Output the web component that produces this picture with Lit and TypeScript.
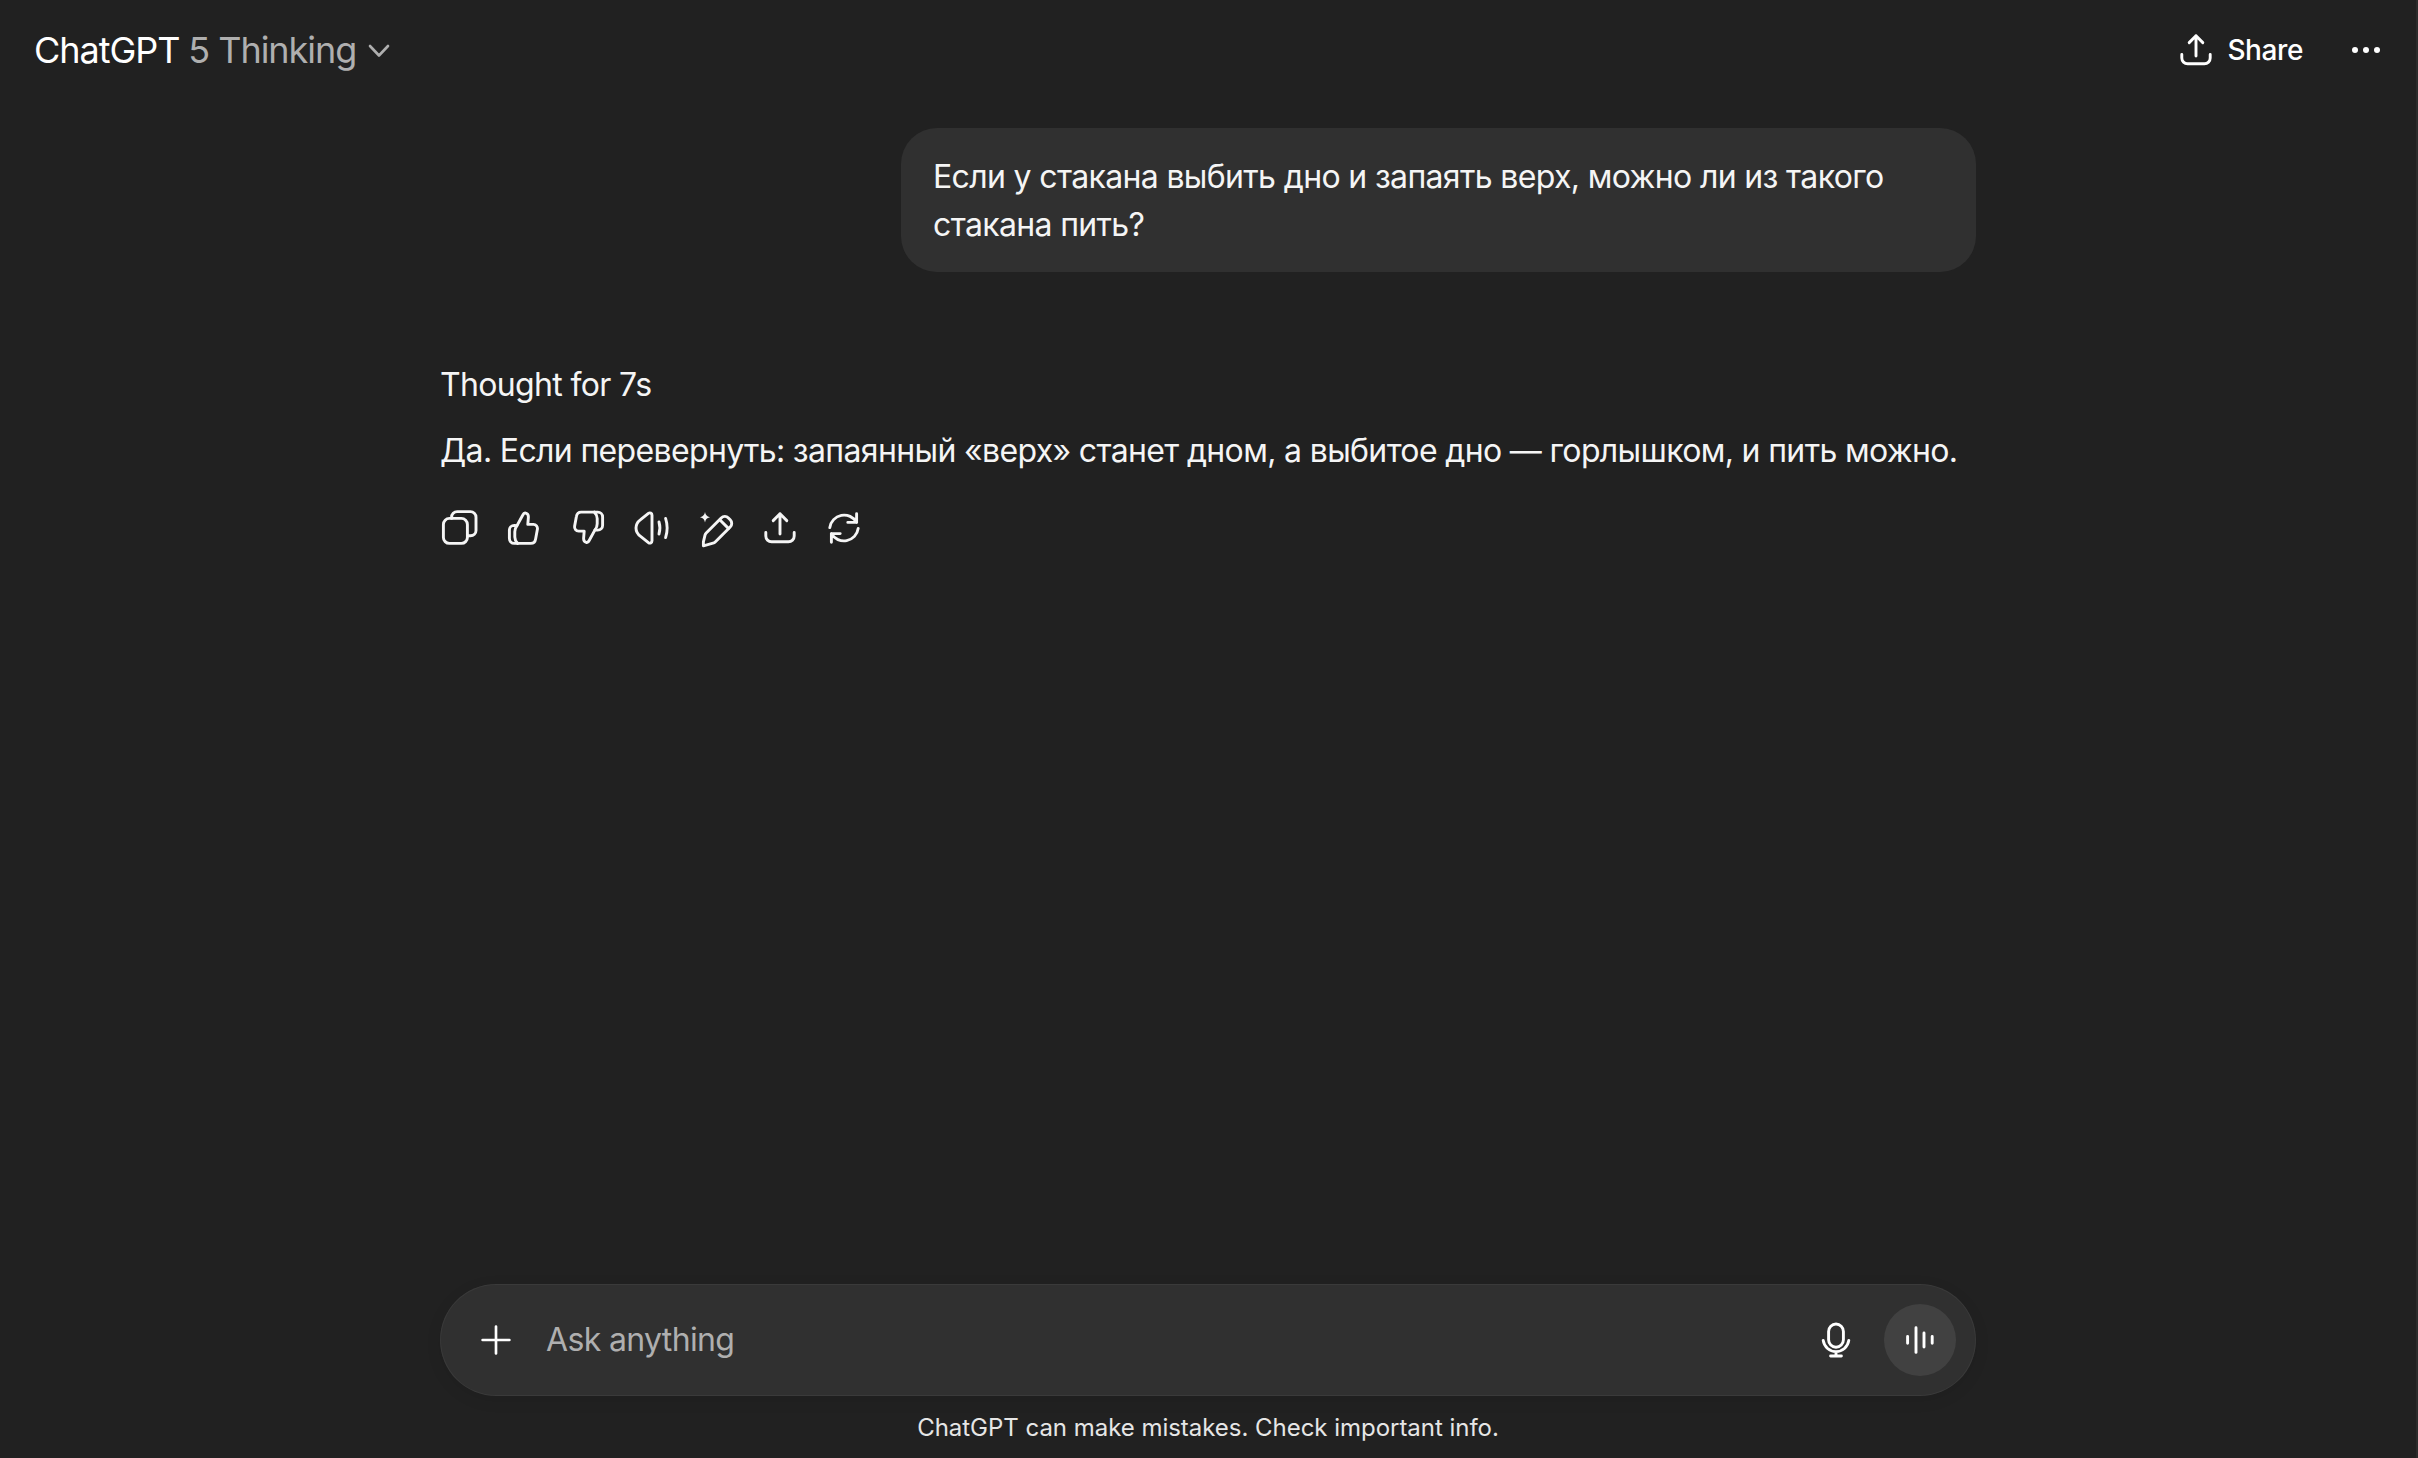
import { LitElement, html, css, svg } from "lit";
import { customElement } from "lit/decorators.js";

const upload = svg`<path d="M10 2.9v10.1M6.6 6.300 10 2.900l3.400 3.400M2.900 12.200v1.800c0 1.600 1.300 2.900 2.900 2.900h8.400c1.600 0 2.900-1.300 2.900-2.900v-1.800"/>`;
const thumb = svg`<path d="M6.500 8.800l2.900-5.300c.3-.6.900-1.100 1.500-.9.900.2 1.300 1 1.300 1.900l-.3 3.700h2.800c1.300 0 2.200 1.200 2 2.400l-.9 4.900c-.2 1.300-1.200 2.200-2.400 2.200H5.100c-1.300 0-2.400-1.100-2.400-2.400V11c0-1.300 1.100-2.300 2.400-2.300z"/><path d="M6.500 8.800c-.7.9-1.100 2-1.100 3.100v2.600c0 1.200.5 2.300 1.400 3.200"/>`;

const icons = [
  svg`<rect x="1.700" y="5.200" width="12" height="12.500" rx="3"/><path d="M5.800 5.200V4.600c0-1.500 1.200-2.800 2.800-2.800h6.600c1.500 0 2.800 1.200 2.800 2.800v6.600c0 1.500-1.200 2.600-2.800 2.700h-1.500"/>`,
  thumb,
  svg`<g transform="rotate(180 10 10) translate(0 .25)">${thumb}</g>`,
  svg`<path d="M10 3.600v12.800c0 1-1 1.500-1.800.9l-3.900-3.100C2.800 13.100 2 12 2 10s.8-3.100 2.300-4.200l3.900-3.100C9 2.100 10 2.600 10 3.600z"/><path d="M13.500 7c.6 2 .6 4 0 6M16.800 5.200c1 3.100 1 6.500 0 9.600"/>`,
  svg`<path d="M3.700 16.900l.8-3.300c.1-.4.3-.8.6-1.100l7.500-7.500c1-1 2.600-1 3.600 0l.9.9c1 1 1 2.600 0 3.600l-7.500 7.500c-.3.3-.7.500-1.100.6l-4.800 1.300z"/><path d="M12 6l4.200 4.200"/><path class="fill" d="M4.500 2c.3 1.400.8 2.200 2.500 2.600-1.700.4-2.200 1.200-2.500 2.600-.3-1.400-.8-2.200-2.500-2.600 1.700-.4 2.200-1.200 2.500-2.600z"/>`,
  upload,
  svg`<path d="M2.900 9.800A7.200 7.200 0 0 1 16.300 7.200M16.300 2.900v4.300h-4.400M17.100 10.200A7.200 7.200 0 0 1 3.700 12.800M3.700 17.100v-4.300h4.400"/>`,
];

@customElement("app-root")
export class AppRoot extends LitElement {
  static styles = css`
    :host { display: block; background: #212121; color: #f5f5f5; font-family: Inter, "Noto Sans", sans-serif; }
    svg { display: block; width: 40px; height: 40px; fill: none; stroke: currentColor; stroke-width: 1.45; stroke-linecap: round; stroke-linejoin: round; }
    .fill { fill: currentColor; stroke: none; }
    .page { display: flex; flex-direction: column; height: 100vh; box-sizing: border-box; border-right: 2px solid #2c2c2c; overflow: hidden; }
    .header { display: flex; align-items: center; justify-content: space-between; height: 100px; flex: none; padding: 0 36px 0 34px; box-sizing: border-box; }
    .title { display: flex; align-items: center; font-size: 36px; letter-spacing: -1.05px; color: #fff; white-space: nowrap; }
    .title span { color: #afafaf; margin-left: 9px; }
    .chev { width: 24px; height: 24px; margin-left: 11px; margin-top: 2px; color: #afafaf; stroke-width: 2.6; }
    .actions { display: flex; align-items: center; }
    .share { display: flex; align-items: center; gap: 11px; font-size: 28px; font-weight: 500; letter-spacing: -0.4px; color: #fff; margin-right: 49px; }
    .dots { display: flex; gap: 5px; }
    .dots i { width: 6px; height: 6px; border-radius: 50%; background: #fff; }
    .thread { flex: 1; width: 1536px; margin: 0 auto; display: flex; flex-direction: column; font-size: 32px; line-height: 48px; letter-spacing: -0.65px; }
    .bubble { align-self: flex-end; box-sizing: border-box; width: 1075px; margin-top: 28px; padding: 25px 32px 23px; background: #303030; border-radius: 36px; }
    .thought { margin-top: 89px; }
    .answer { margin-top: 18px; white-space: nowrap; }
    .tools { display: flex; gap: 24px; margin-top: 33px; }
    .composer { flex: none; width: 1536px; height: 112px; margin: 0 auto; box-sizing: border-box; display: flex; align-items: center; padding: 0 20px; background: #303030; border-radius: 56px; box-shadow: inset 0 0 0 1px rgba(255,255,255,.05), 0 4px 16px rgba(0,0,0,.08); }
    .ic { flex: none; width: 72px; height: 72px; display: flex; align-items: center; justify-content: center; color: #fff; }
    .plus { stroke-width: 1.33; }
    .placeholder { flex: 1; margin-left: 14px; padding-bottom: 2px; font-size: 32px; letter-spacing: -0.65px; color: #afafaf; }
    .voice { background: #414141; border-radius: 50%; margin-left: 12px; }
    .foot { flex: none; height: 62px; display: flex; align-items: center; justify-content: center; font-size: 24px; letter-spacing: -0.03px; color: #e6e6e6; }
  `;

  render() {
    return html`<div class="page">
      <div class="header">
        <div class="title">ChatGPT<span>5 Thinking</span>
          <svg class="chev" viewBox="0 0 24 24"><path d="M3 7l9 9.500L21 7"/></svg>
        </div>
        <div class="actions">
          <div class="share"><svg viewBox="0 0 20 20">${upload}</svg>Share</div>
          <div class="dots"><i></i><i></i><i></i></div>
        </div>
      </div>
      <div class="thread">
        <div class="bubble">Если у стакана выбить дно и запаять верх, можно ли из такого стакана пить?</div>
        <div class="thought">Thought for 7s</div>
        <div class="answer">Да. Если перевернуть: запаянный «верх» станет дном, а выбитое дно — горлышком, и пить можно.</div>
        <div class="tools">${icons.map((i) => html`<svg viewBox="0 0 20 20">${i}</svg>`)}</div>
      </div>
      <div class="composer">
        <div class="ic"><svg class="plus" viewBox="0 0 20 20"><path d="M10 3.300v13.400M3.300 10h13.400"/></svg></div>
        <div class="placeholder">Ask anything</div>
        <div class="ic"><svg viewBox="0 0 20 20"><rect x="6.300" y="2" width="7.400" height="11.600" rx="3.700"/><path d="M3.600 10.200c.5 3.300 3.200 5.600 6.400 5.600s5.900-2.300 6.400-5.600M10 15.800V18M7.300 18h5.400"/></svg></div>
        <div class="ic voice"><svg viewBox="0 0 20 20"><path d="M3.800 8.200v3.400M8 3.900v12.300M12 6.500v7M16.100 8.200v3.400"/></svg></div>
      </div>
      <div class="foot">ChatGPT can make mistakes. Check important info.</div>
    </div>`;
  }
}
